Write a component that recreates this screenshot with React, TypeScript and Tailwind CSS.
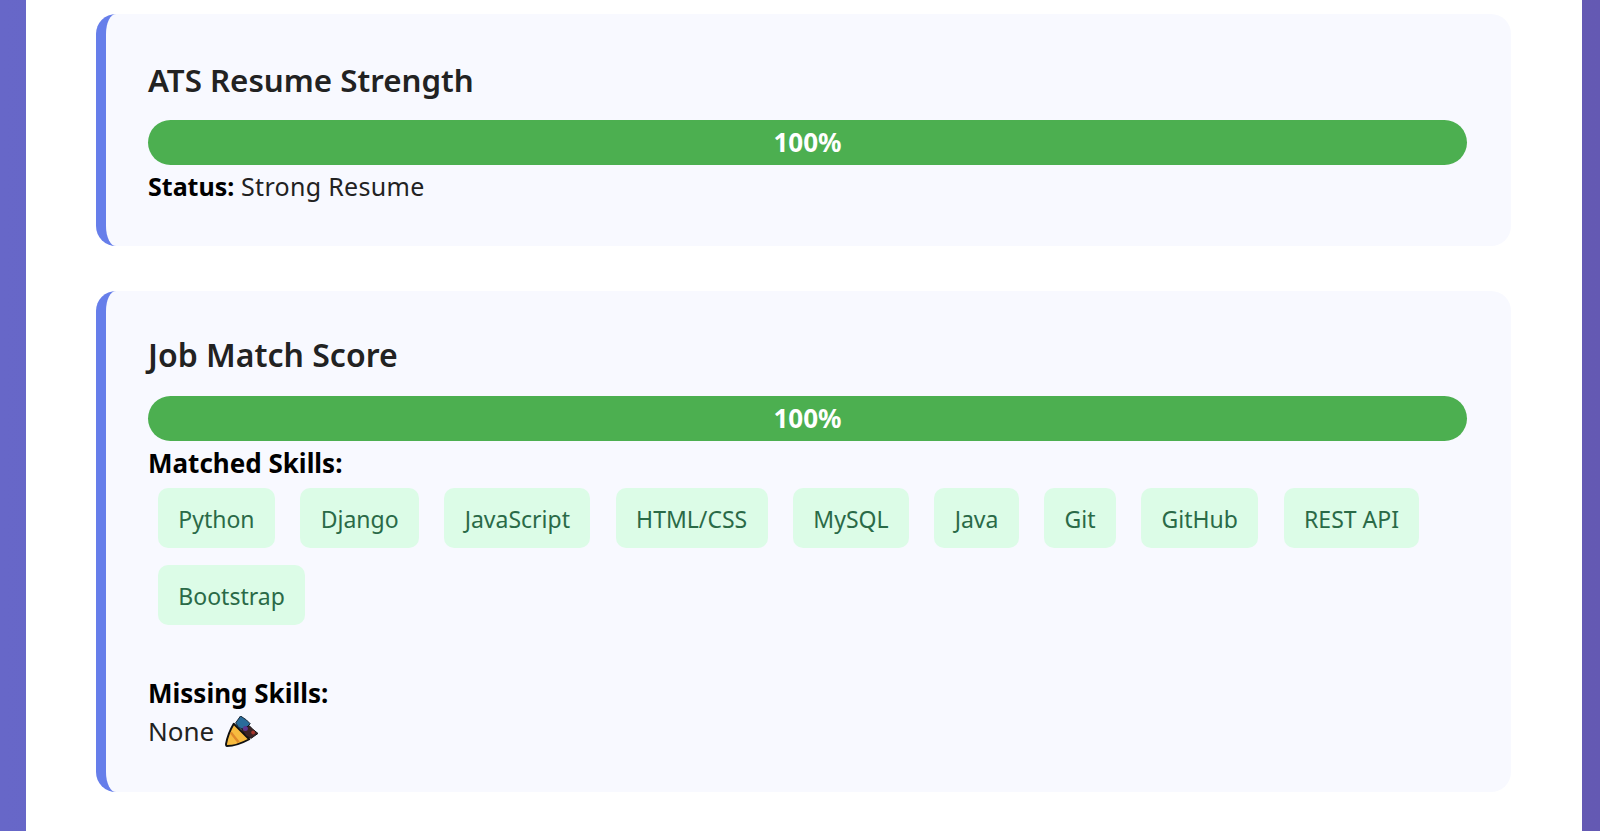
const skills = ["Python", "Django", "JavaScript", "HTML/CSS", "MySQL", "Java", "Git", "GitHub", "REST API", "Bootstrap"];

const ProgressBar = () => (
  <div className="h-[45px] w-[1319px] rounded-[23px] bg-[#4caf50] flex items-center justify-center text-white font-bold text-[26px]">
    100%
  </div>
);

const PartyPopper = () => (
  <svg viewBox="0 0 34 32" className="w-[33px] h-[31px] ml-[11px]" aria-hidden="true">
    <path d="M9 8 L25 24 Q12 31 2 31 Q1 31 1 29 Q3 18 9 8 Z" fill="#f7bb3f" stroke="#111" strokeWidth="2" strokeLinejoin="round" />
    <path d="M6 17 L14 27" stroke="#e0892b" strokeWidth="2.5" />
    <path d="M11 7 L16 0 L22 4 L26 8 L20 14 L14 12 Z" fill="#2a6c9a" stroke="#10202f" strokeWidth="1" />
    <path d="M17 14 L25 10 L29 14 L34 18 L27 23 L22 21 Z" fill="#3d2324" stroke="#111" strokeWidth="1" />
    <circle cx="21" cy="13" r="2.6" fill="#5c358f" />
    <circle cx="29" cy="17" r="2" fill="#a5352b" />
  </svg>
);

export default function App() {
  return (
    <div className="h-[831px] overflow-hidden pl-[26px] pr-[18px] bg-[linear-gradient(90deg,#6767c8,#6459b3)] font-['Noto_Sans',sans-serif]">
      <div className="h-full bg-white pl-[70px] pr-[71px] pt-[14px] flex flex-col gap-[45px]">
        <section className="h-[232px] shrink-0 rounded-[20px] border-l-[10px] border-[#667eea] bg-[#f8f9ff] pl-[42px] pt-[46px]">
          <h2 className="text-[31.3px] leading-[40px] font-semibold text-[#222]">ATS Resume Strength</h2>
          <div className="mt-[20px]"><ProgressBar /></div>
          <p className="text-[25px] leading-[43px] tracking-[0.3px] text-[#222]"><b className="text-black tracking-normal">Status:</b> Strong Resume</p>
        </section>
        <section className="h-[501px] shrink-0 rounded-[20px] border-l-[10px] border-[#667eea] bg-[#f8f9ff] pl-[42px] pt-[44px]">
          <h2 className="text-[32px] leading-[40px] font-semibold text-[#222]">Job Match Score</h2>
          <div className="mt-[21px]"><ProgressBar /></div>
          <p className="text-[26px] leading-[45px] font-bold text-black">Matched Skills:</p>
          <div className="flex flex-wrap gap-x-[25.5px] gap-y-[17px] pl-[10px] w-[1319px] mt-[2px]">
            {skills.map((skill) => (
              <span key={skill} className="h-[60px] flex items-center px-[20.3px] pt-[2px] rounded-[10px] bg-[#dcfce7] text-[#2a6a47] text-[23px]">
                {skill}
              </span>
            ))}
          </div>
          <p className="text-[26px] leading-[45px] font-bold text-black mt-[46px]">Missing Skills:</p>
          <p className="text-[26px] leading-[31px] text-[#222] flex items-center">None <PartyPopper /></p>
        </section>
      </div>
    </div>
  );
}
